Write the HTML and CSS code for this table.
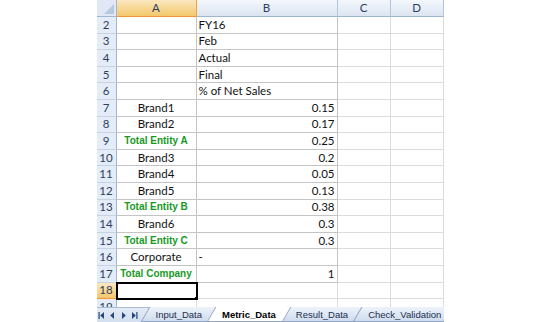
FILE: index.html
```html
<!DOCTYPE html>
<html lang="en">
<head>
    <meta charset="UTF-8">
    <meta name="viewport" content="width=device-width, initial-scale=1.0">
    <title>Metric_Data</title>
    <link rel="stylesheet" href="styles.css">
</head>
<body>
    <div class="sheet">
        <div class="cells">
            <table class="grid">
                <colgroup>
                    <col class="col-hd"><col class="col-a"><col class="col-b"><col class="col-c"><col class="col-d">
                </colgroup>
                <tr class="head">
                    <th class="corner"><div class="corner-in"><span class="tri"></span></div></th>
                    <th class="on">A</th><th>B</th><th>C</th><th>D</th>
                </tr>
                <tr><th>2</th><td class="bx"></td><td class="bx">FY16</td><td></td><td></td></tr>
                <tr><th>3</th><td class="bx"></td><td class="bx">Feb</td><td></td><td></td></tr>
                <tr><th>4</th><td class="bx"></td><td class="bx">Actual</td><td></td><td></td></tr>
                <tr><th>5</th><td class="bx"></td><td class="bx">Final</td><td></td><td></td></tr>
                <tr><th>6</th><td class="bx"></td><td class="bx">% of Net Sales</td><td></td><td></td></tr>
                <tr><th>7</th><td class="bx mid">Brand1</td><td class="bx num">0.15</td><td></td><td></td></tr>
                <tr><th>8</th><td class="bx mid">Brand2</td><td class="bx num">0.17</td><td></td><td></td></tr>
                <tr><th>9</th><td class="bx tot">Total Entity A</td><td class="bx num">0.25</td><td></td><td></td></tr>
                <tr><th>10</th><td class="bx mid">Brand3</td><td class="bx num">0.2</td><td></td><td></td></tr>
                <tr><th>11</th><td class="bx mid">Brand4</td><td class="bx num">0.05</td><td></td><td></td></tr>
                <tr><th>12</th><td class="bx mid">Brand5</td><td class="bx num">0.13</td><td></td><td></td></tr>
                <tr><th>13</th><td class="bx tot">Total Entity B</td><td class="bx num">0.38</td><td></td><td></td></tr>
                <tr><th>14</th><td class="bx mid">Brand6</td><td class="bx num">0.3</td><td></td><td></td></tr>
                <tr><th>15</th><td class="bx tot">Total Entity C</td><td class="bx num">0.3</td><td></td><td></td></tr>
                <tr><th>16</th><td class="bx mid">Corporate</td><td class="bx">-</td><td></td><td></td></tr>
                <tr><th>17</th><td class="bx tot">Total Company</td><td class="bx num">1</td><td></td><td></td></tr>
                <tr><th class="on">18</th><td class="sel"><span class="handle"></span></td><td></td><td></td><td></td></tr>
                <tr><th>19</th><td></td><td></td><td></td><td></td></tr>
            </table>
        </div>
        <div class="tabs">
            <div class="nav">
                <svg width="48" height="15" viewBox="0 0 48 15">
                    <rect x="1.5" y="4" width="1.2" height="7"/>
                    <path d="M7 4 L3.2 7.5 L7 11Z"/>
                    <path d="M17 4 L13.2 7.5 L17 11Z"/>
                    <path d="M25 4 L28.8 7.5 L25 11Z"/>
                    <path d="M35 4 L38.8 7.5 L35 11Z"/>
                    <rect x="39.3" y="4" width="1.2" height="7"/>
                </svg>
            </div>
            <div class="tab">Input_Data</div>
            <div class="tab active">Metric_Data</div>
            <div class="tab">Result_Data</div>
            <div class="tab">Check_Validation</div>
        </div>
    </div>
</body>
</html>
```
FILE: styles.css
```css
body {
    margin: 0;
    background-color: #fff;
    font-family: "Lato", "Liberation Sans", sans-serif;
}

.sheet {
    width: 347px;
    height: 322px;
    margin: 0 auto;
    display: flex;
    flex-direction: column;
    overflow: hidden;
}

.cells {
    flex: 1;
    overflow: hidden;
}

.grid {
    border-collapse: separate;
    border-spacing: 0;
    table-layout: fixed;
    width: 347px;
}

.col-hd { width: 20px; }
.col-a { width: 80px; }
.col-b { width: 141px; }
.col-c { width: 53px; }
.col-d { width: 53px; }

.grid tr {
    height: 16.6px;
}

.grid tr.head {
    height: 17px;
}

.grid td {
    padding: 0 2px;
    border-right: 1px solid #dadcdd;
    border-bottom: 1px solid #dadcdd;
    font-size: 11.5px;
    line-height: 14px;
    color: #111;
    white-space: nowrap;
    overflow: hidden;
}

.grid td.bx {
    border-right-color: #c4c4c4;
    border-bottom-color: #c4c4c4;
}

.grid th {
    padding: 0;
    font-weight: normal;
    font-size: 11.5px;
    line-height: 14px;
    color: #2b3f5c;
    text-align: center;
    background-color: #e4ecf7;
    border-right: 1px solid #9eb6ce;
    border-bottom: 1px solid #c6d3e4;
}

.head th {
    background: linear-gradient(#f4f7fc, #e6edf7 55%, #dbe4f1);
    border-right: 1px solid #b3c6dc;
    border-bottom: 1px solid #9eb6ce;
}

.grid th.on,
.head th.on {
    background: linear-gradient(#fbe7bf, #f8d690 55%, #f3c86d);
    border-right-color: #f2a340;
    border-bottom-color: #f29536;
}

.head th.corner {
    background: #dfe8f4;
    border-right-color: #9eb6ce;
}

.corner-in {
    display: flex;
    justify-content: flex-end;
    align-items: flex-end;
    height: 16px;
    padding: 0 2px 2px 0;
    box-sizing: border-box;
}

.tri {
    width: 0;
    height: 0;
    border-left: 10px solid transparent;
    border-bottom: 10px solid #b7c9de;
}

.mid {
    text-align: center;
}

.num {
    text-align: right;
}

.grid td.tot {
    text-align: center;
    color: #179a1f;
    font-family: "Liberation Sans", sans-serif;
    font-weight: bold;
    font-size: 10px;
    padding: 0;
}

.grid td.sel {
    position: relative;
    outline: 2px solid #000;
    outline-offset: -1px;
}

.handle {
    position: absolute;
    right: -3px;
    bottom: -3px;
    width: 5px;
    height: 5px;
    background-color: #000;
    border: 1px solid #fff;
    box-sizing: border-box;
}

.tabs {
    height: 15px;
    display: flex;
    align-items: stretch;
    background: linear-gradient(#e3ebf6, #d3dfef);
    border-top: 1px solid #a9bdd6;
    box-sizing: border-box;
}

.nav {
    width: 48px;
    flex: none;
    display: flex;
    align-items: center;
}

.nav svg {
    fill: #27477a;
}

.tab {
    position: relative;
    isolation: isolate;
    padding: 0 11px;
    margin-right: -2px;
    font-family: "Liberation Sans", sans-serif;
    font-size: 9.5px;
    line-height: 14px;
    color: #1c2f4f;
    white-space: nowrap;
}

.tab::before {
    content: "";
    position: absolute;
    top: -1px;
    bottom: 0;
    left: 0;
    right: 0;
    z-index: -1;
    background: linear-gradient(#eef3fa, #cfdcee);
    border: 1px solid #8fa6c4;
    border-top: none;
    transform: skewX(-30deg);
}

.tab.active {
    font-weight: bold;
    color: #000;
    z-index: 1;
}

.tab.active::before {
    background: #fff;
}
```
